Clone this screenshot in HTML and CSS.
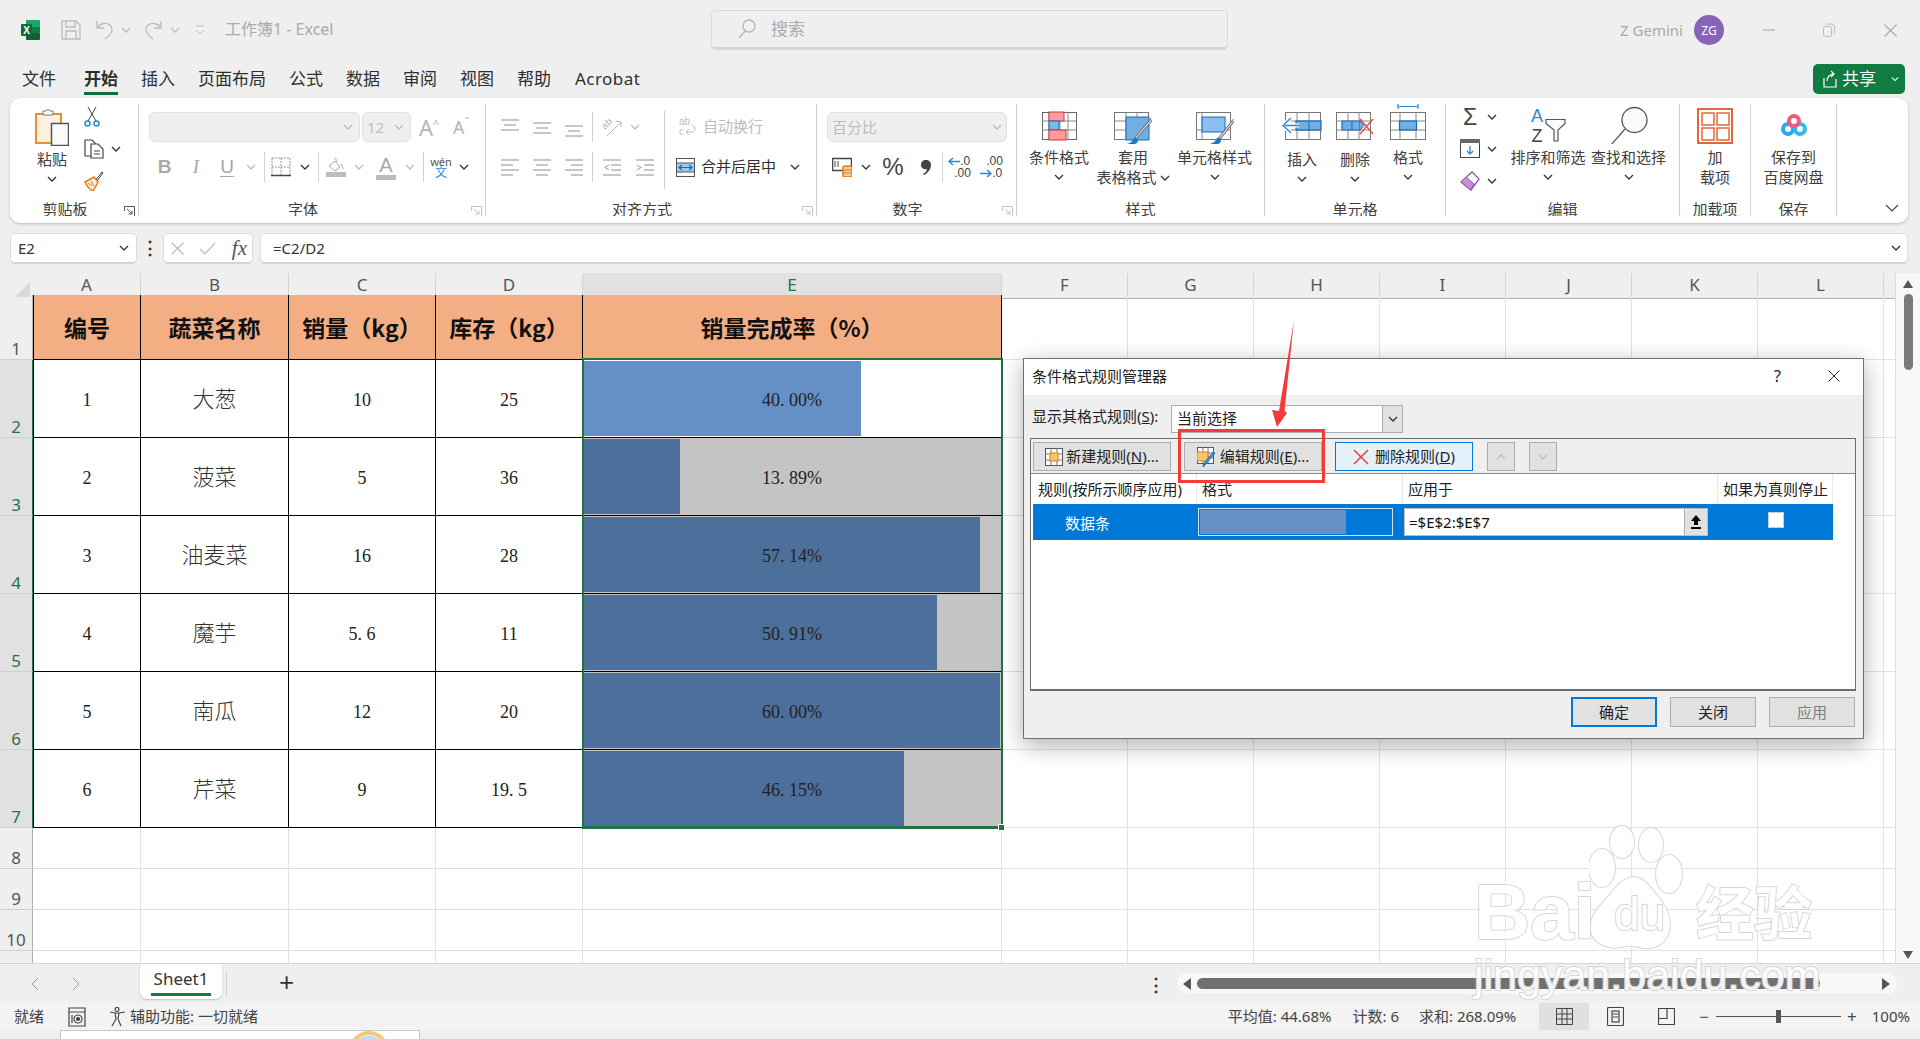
FILE: index.html
```html
<!DOCTYPE html>
<html lang="zh-CN">
<head>
<meta charset="utf-8">
<title>工作簿1 - Excel</title>
<link rel="stylesheet" href="styles.css">
</head>
<body>
<svg class="defs" width="0" height="0"><defs>
<symbol id="chev" viewBox="0 0 10 6"><path d="M1 1l4 4 4-4" fill="none" stroke="currentColor" stroke-width="1.3"/></symbol>
<symbol id="launch" viewBox="0 0 11 11"><path d="M.5 5V.5H10.500V10.500H6M3 3l5 5M8 4.500V8H4.500" fill="none" stroke="currentColor"/></symbol>
</defs></svg>
<div class="app">

<header class="titlebar">
  <div class="qat">
    <svg width="19" height="20" viewBox="0 0 19 20"><rect x="5" y="0" width="14" height="7" rx="1" fill="#21a366"/><rect x="5" y="7" width="14" height="6" fill="#107c41"/><rect x="5" y="13" width="14" height="7" rx="1" fill="#185c37"/><rect x="0" y="4" width="11" height="12" rx="1" fill="#0f6b3a"/><text x="5.500" y="13.500" font-size="10" font-weight="700" text-anchor="middle" fill="#fff" font-family="Liberation Sans">X</text></svg>
    <svg width="20" height="20" viewBox="0 0 20 20" fill="none" stroke="#bcbcbc" stroke-width="1.300"><path d="M1 1h14l4 4v14H1zM5 1v6h9V1M5 19v-8h10v8"/></svg>
    <svg width="18" height="20" viewBox="0 0 18 20" fill="none" stroke="#bcbcbc" stroke-width="1.300"><path d="M1 1v7h7M1 8c3-5 9-6 13-3 4 4 2 9-5 14"/></svg>
    <svg class="chev dis"><use href="#chev"/></svg>
    <svg width="18" height="20" viewBox="0 0 18 20" fill="none" stroke="#bcbcbc" stroke-width="1.300"><path d="M17 1v7h-7M17 8C14 3 8 2 4 5c-4 4-2 9 5 14"/></svg>
    <svg class="chev dis"><use href="#chev"/></svg>
    <svg width="10" height="12" viewBox="0 0 10 12" fill="none" stroke="#bcbcbc"><path d="M1 2h8M1 6l4 4 4-4"/></svg>
    <span class="doc">工作簿1 - Excel</span>
  </div>
  <div class="search">
    <svg width="18" height="20" viewBox="0 0 18 20" fill="none" stroke="#b5b5b5" stroke-width="1.300"><circle cx="11" cy="7" r="6"/><path d="M7 12l-6 7"/></svg>
    <span>搜索</span>
  </div>
  <div class="winbar">
    <span class="user">Z Gemini</span>
    <span class="avatar">ZG</span>
    <svg class="wmin" width="12" height="2" viewBox="0 0 12 2"><path d="M0 1h12" stroke="#bbb" stroke-width="1.500"/></svg>
    <svg class="wres" width="12" height="14" viewBox="0 0 12 14" fill="none" stroke="#bbb"><rect x=".5" y="3.500" width="8" height="10" rx="2"/><path d="M3 1h5q3.500 0 3.500 3v7"/></svg>
    <svg class="wcls" width="13" height="13" viewBox="0 0 13 13" stroke="#aaa" stroke-width="1.200"><path d="M.5.500l12 12M12.500.500l-12 12"/></svg>
  </div>
</header>

<nav class="tabs">
  <span class="tab">文件</span><span class="tab active">开始</span><span class="tab">插入</span><span class="tab">页面布局</span><span class="tab">公式</span><span class="tab">数据</span><span class="tab">审阅</span><span class="tab">视图</span><span class="tab">帮助</span><span class="tab acro">Acrobat</span>
  <div class="share">
    <svg width="15" height="18" viewBox="0 0 15 18" fill="none" stroke="#fff" stroke-width="1.200"><path d="M1 8v9h12V9M4 11c0-4 3-7 7-7M8 1l3 3-3 3"/></svg>
    <span>共享</span>
    <svg class="chev white"><use href="#chev"/></svg>
  </div>
</nav>

<section class="ribbon">
  <div class="group g-clip">
    <div class="gbody">
      <div class="paste">
        <svg width="34" height="38" viewBox="0 0 34 38"><rect x="1" y="6" width="25" height="29" fill="#fdf0df" stroke="#e8912d" stroke-width="2"/><path d="M8 6V3h3l2-2 2 2h3v4H8z" fill="#fff" stroke="#777"/><rect x="16.500" y="15.500" width="17" height="22" fill="#fafafa" stroke="#555" stroke-width="1.500"/></svg>
        <span class="txt">粘贴</span>
        <svg class="chev"><use href="#chev"/></svg>
      </div>
      <div class="clipstack">
        <div class="cliprow"><svg width="16" height="20" viewBox="0 0 16 20" fill="none"><path d="M4 0l8 14M12 0L4 14" stroke="#444"/><circle cx="3.500" cy="16.500" r="2.500" stroke="#2b88d8" stroke-width="1.500"/><circle cx="12.500" cy="16.500" r="2.500" stroke="#2b88d8" stroke-width="1.500"/></svg></div>
        <div class="cliprow"><svg width="20" height="20" viewBox="0 0 20 20" fill="#fff" stroke="#444" stroke-width="1.200"><path d="M1 1h7l3 3v13H1z"/><path d="M7 5h7l5 5v9H7z"/><path d="M10 12h6M10 15h6" stroke-width="1"/></svg><svg class="chev"><use href="#chev"/></svg></div>
        <div class="cliprow"><svg width="20" height="20" viewBox="0 0 20 20" fill="none"><path d="M12 8l3-3 3-4 1 1-3 4-2 3z" fill="#fff" stroke="#444"/><path d="M1 11l9-5 4 5-5 9c-3-1-6-5-8-9z" fill="#fdf0df" stroke="#e8790e" stroke-width="1.500"/><path d="M4 12l4 3M7 10l3 5" stroke="#e8790e"/></svg></div>
      </div>
    </div>
    <div class="glabel"><span>剪贴板</span><svg class="launch dark"><use href="#launch"/></svg></div>
  </div>

  <div class="group g-font">
    <div class="gbody rows">
      <div class="tool-row font-row1">
        <div class="combo font-name"><svg class="chev dis"><use href="#chev"/></svg></div>
        <div class="combo font-size"><span>12</span><svg class="chev dis"><use href="#chev"/></svg></div>
        <span class="growa big-a">A<sup>^</sup></span>
        <span class="growa small-a">A<sup>ˇ</sup></span>
      </div>
      <div class="tool-row font-row2 dimmed">
        <span class="fmt bold">B</span><span class="fmt ital">I</span><span class="fmt under">U</span>
        <svg class="chev dis"><use href="#chev"/></svg><i class="vsep"></i>
        <svg width="20" height="20" viewBox="0 0 20 20" fill="none" stroke="#999"><path stroke-dasharray="2 1" d="M1 1h18M1 1v17M19 1v17M10 1v17M1 10h18"/><path d="M0 18.500h20" stroke="#444" stroke-width="1.500"/></svg>
        <svg class="chev"><use href="#chev"/></svg><i class="vsep"></i>
        <svg width="20" height="20" viewBox="0 0 20 20" fill="none" stroke="#aaa"><path d="M3 9l6-5 5 6-5 4z"/><path d="M8 2c2-1 3 1 3 3M15 7c1 2 2 4 2 5"/><rect x="0" y="15" width="20" height="5" fill="#bcbcbc" stroke="none"/></svg>
        <svg class="chev dis"><use href="#chev"/></svg>
        <span class="color-a">A</span>
        <svg class="chev dis"><use href="#chev"/></svg><i class="vsep"></i>
        <span class="wen"><b>wén</b><em>文</em></span>
        <svg class="chev"><use href="#chev"/></svg>
      </div>
    </div>
    <div class="glabel"><span>字体</span><svg class="launch"><use href="#launch"/></svg></div>
  </div>

  <div class="group g-align">
    <div class="gbody flexrow">
      <div class="align-left rows">
        <div class="tool-row align-row">
          <svg class="al" viewBox="0 0 18 20"><path d="M0 3h18M3 8h12M0 13h18"/></svg>
          <svg class="al" viewBox="0 0 18 20"><path d="M0 6h18M3 11h12M0 16h18"/></svg>
          <svg class="al" viewBox="0 0 18 20"><path d="M0 9h18M3 14h12M0 19h18"/></svg>
          <i class="vsep"></i>
          <svg width="20" height="20" viewBox="0 0 20 20" fill="none" stroke="#b5b5b5"><text transform="translate(3 13) rotate(-45)" font-size="10" fill="#b5b5b5" stroke="none" font-family="Liberation Sans">ab</text><path d="M5 19L19 5M14 4l5 1v5"/></svg>
          <svg class="chev dis"><use href="#chev"/></svg>
        </div>
        <div class="tool-row align-row">
          <svg class="al" viewBox="0 0 18 20"><path d="M0 3h18M0 8h12M0 13h18M0 18h12"/></svg>
          <svg class="al" viewBox="0 0 18 20"><path d="M0 3h18M3 8h12M0 13h18M3 18h12"/></svg>
          <svg class="al" viewBox="0 0 18 20"><path d="M0 3h18M6 8h12M0 13h18M6 18h12"/></svg>
          <i class="vsep"></i>
          <svg class="al" viewBox="0 0 18 20"><path d="M0 3h18M8 8h10M8 13h10M0 18h18M6 8l-4 2.500 4 2.500"/></svg>
          <svg class="al al2" viewBox="0 0 18 20"><path d="M0 3h18M8 8h10M8 13h10M0 18h18M1 8l4 2.500-4 2.500"/></svg>
        </div>
      </div>
      <div class="align-right">
        <div class="wrapline">
          <svg width="18" height="20" viewBox="0 0 18 20" fill="none" stroke="#bcbcbc"><text x="0" y="8" font-size="10" fill="#bcbcbc" stroke="none" font-family="Liberation Sans">ab</text><text x="0" y="18" font-size="10" fill="#bcbcbc" stroke="none" font-family="Liberation Sans">c</text><path d="M13 8c4 2 4 7-1 7H7M10 12l-3 3 3 3"/></svg>
          <span>自动换行</span>
        </div>
        <div class="mergeline">
          <svg width="19" height="19" viewBox="0 0 19 19"><rect x=".5" y=".5" width="18" height="18" fill="#fff" stroke="#555"/><rect x="1" y="5" width="17" height="9" fill="#9ccbee"/><path d="M1 5h17M1 14h17" stroke="#555"/><path d="M4 9.500h11M6 7l-3 2.500L6 12M13 7l3 2.500-3 2.500" fill="none" stroke="#0f6cbd" stroke-width="1.200"/></svg>
          <span>合并后居中</span>
          <svg class="chev"><use href="#chev"/></svg>
        </div>
      </div>
    </div>
    <div class="glabel"><span>对齐方式</span><svg class="launch"><use href="#launch"/></svg></div>
  </div>

  <div class="group g-num">
    <div class="gbody rows">
      <div class="tool-row"><div class="combo num-box"><span>百分比</span><svg class="chev dis"><use href="#chev"/></svg></div></div>
      <div class="tool-row num-row2">
        <svg width="20" height="20" viewBox="0 0 20 20"><rect x=".5" y="1.500" width="19" height="12" fill="#fff" stroke="#444" stroke-width="1.500"/><path d="M3 4v6M6 4v6" stroke="#444"/><rect x="11" y="9" width="9" height="11" rx="2" fill="#f7c9a0" stroke="#e8790e" stroke-width="1.500"/><path d="M11 13h9M11 16h9" stroke="#e8790e"/></svg>
        <svg class="chev"><use href="#chev"/></svg>
        <span class="pct">%</span>
        <svg width="10" height="15" viewBox="0 0 10 15"><path d="M5 0c3 0 5 2 5 5 0 4-3 8-7 10l-1-1c2-1 4-3 4-5-3 1-6-1-6-4 0-3 2-5 5-5z" fill="#444"/></svg>
        <i class="vsep"></i>
        <span class="dec"><b><svg class="darr" viewBox="0 0 12 9"><path d="M12 4.500H1M5 1L1 4.500 5 8" fill="none" stroke="#2b88d8" stroke-width="1.500"/></svg>.0</b><b class="ind">.00</b></span>
        <span class="dec"><b class="ind">.00</b><b><svg class="darr" viewBox="0 0 12 9"><path d="M0 4.500h11M7 1l4 3.500L7 8" fill="none" stroke="#2b88d8" stroke-width="1.500"/></svg>.0</b></span>
      </div>
    </div>
    <div class="glabel"><span>数字</span><svg class="launch"><use href="#launch"/></svg></div>
  </div>

  <div class="group g-style">
    <div class="gbody flexrow">
      <div class="big w84">
        <div class="bicon"><svg width="35" height="40" viewBox="0 0 35 40"><g transform="translate(0 8)"><rect x=".5" y=".5" width="34" height="27" fill="#fff" stroke="#666"/><path d="M7 0v28M18 0v28M26 0v28M0 9h35M0 18h35" stroke="#888"/><rect x="7" y="0" width="15" height="9" fill="#ff9a9f" stroke="#d13438"/><rect x="7" y="9" width="10" height="9" fill="#7db8e8" stroke="#0f6cbd"/><rect x="7" y="18" width="17" height="10" fill="#ff9a9f" stroke="#d13438"/></g></svg></div>
        <span class="txt">条件格式</span><span class="chevline"><svg class="chev"><use href="#chev"/></svg></span>
      </div>
      <div class="big w64">
        <div class="bicon"><svg width="38" height="40" viewBox="0 0 38 40"><g transform="translate(0 8)"><rect x=".5" y=".5" width="34" height="27" fill="#fff" stroke="#777"/><path d="M12 0v28M23 0v28M0 9h35M0 18h35" stroke="#888"/><rect x="12" y="5" width="23" height="23" fill="#74aee0" stroke="#0f6cbd"/><path d="M38 7L21 27" stroke="#777" stroke-width="3"/><path d="M38 7L21 27" stroke="#fff" stroke-width="1"/><path d="M20 26c4-1 5 3 3 5-3 2-7 2-10 1 3-1 5-2 7-6z" fill="#1f79c4"/></g></svg></div>
        <span class="txt">套用</span><span class="txt">表格格式<svg class="chev inl"><use href="#chev"/></svg></span>
      </div>
      <div class="big w100">
        <div class="bicon"><svg width="38" height="40" viewBox="0 0 38 40"><g transform="translate(0 8)"><rect x=".5" y=".5" width="34" height="27" fill="#fff" stroke="#777"/><path d="M6 0v28M0 18h35" stroke="#888"/><rect x="6" y="5" width="23" height="15" fill="#8abff0" stroke="#0f6cbd"/><path d="M38 8L23 27" stroke="#777" stroke-width="3"/><path d="M38 8L23 27" stroke="#fff" stroke-width="1"/><path d="M21 26c4-1 5 3 3 5-3 2-7 2-10 1 3-1 5-2 7-6z" fill="#1f79c4"/></g></svg></div>
        <span class="txt">单元格样式</span><span class="chevline"><svg class="chev"><use href="#chev"/></svg></span>
      </div>
    </div>
    <div class="glabel nolaunch"><span>样式</span></div>
  </div>

  <div class="group g-cells">
    <div class="gbody flexrow">
      <div class="big w74">
        <div class="bicon"><svg width="40" height="40" viewBox="0 0 40 40"><g transform="translate(0 8)"><rect x="3.500" y=".5" width="35" height="27" fill="#fff" stroke="#777"/><path d="M15 0v28M27 0v28M3 9h36M3 18h36" stroke="#888"/><rect x="14" y="9" width="25" height="9" fill="#74aee0" stroke="#0f6cbd" stroke-width="1.200"/><path d="M27 9v9" stroke="#0f6cbd"/><path d="M17 13.500H3M9 6L1 13.500 9 21" fill="none" stroke="#fff" stroke-width="4"/><path d="M17 13.500H3M9 6L1 13.500 9 21" fill="none" stroke="#2b88d8" stroke-width="1.400"/></g></svg></div>
        <span class="txt lower">插入</span><span class="chevline"><svg class="chev"><use href="#chev"/></svg></span>
      </div>
      <div class="big w32">
        <div class="bicon"><svg width="38" height="40" viewBox="0 0 38 40"><g transform="translate(0 8)"><rect x=".5" y=".5" width="34" height="27" fill="#fff" stroke="#777"/><path d="M12 0v28M23 0v28M0 9h35M0 18h35" stroke="#888"/><path d="M6 9h18v9H6z" fill="#74aee0" stroke="#0f6cbd" stroke-width="1.200"/><path d="M16 9v9M24 9l4 4.500-4 4.500" stroke="#0f6cbd" fill="#74aee0"/><path d="M24 7l13 15M37 7L24 22" stroke="#f04848" stroke-width="1.400"/></g></svg></div>
        <span class="txt lower">删除</span><span class="chevline"><svg class="chev"><use href="#chev"/></svg></span>
      </div>
      <div class="big w75">
        <div class="bicon"><svg width="36" height="40" viewBox="0 0 36 40"><path d="M8 2.500h20M8 0v5M28 0v5" stroke="#2b88d8" stroke-width="1.200"/><g transform="translate(0 8)"><rect x=".5" y=".5" width="35" height="27" fill="#fff" stroke="#777"/><path d="M10 0v28M26 0v28M0 9h35M0 18h35" stroke="#888"/><rect x="9.500" y="9" width="17" height="9" fill="#74aee0" stroke="#0f6cbd" stroke-width="1.200"/></g></svg></div>
        <span class="txt">格式</span><span class="chevline"><svg class="chev"><use href="#chev"/></svg></span>
      </div>
    </div>
    <div class="glabel nolaunch"><span>单元格</span></div>
  </div>

  <div class="group g-edit">
    <div class="gbody flexrow">
      <div class="edit-stack">
        <div class="cliprow"><span class="sigma">Σ</span><svg class="chev"><use href="#chev"/></svg></div>
        <div class="cliprow"><svg width="20" height="20" viewBox="0 0 20 20"><rect x=".5" y=".5" width="19" height="18" fill="#fff" stroke="#444"/><rect x="0" y="0" width="20" height="4" fill="#666"/><path d="M10 7v8M7 12l3 3 3-3" fill="none" stroke="#2b88d8" stroke-width="1.300"/></svg><svg class="chev"><use href="#chev"/></svg></div>
        <div class="cliprow"><svg width="20" height="20" viewBox="0 0 20 20"><path d="M12 1l7 7-8 11-10-8z" fill="#fff" stroke="#9b4fb0" stroke-width="1.300"/><path d="M6 6l8 7-3.500 6L1 11z" fill="#c78fd6" stroke="#9b4fb0"/></svg><svg class="chev"><use href="#chev"/></svg></div>
      </div>
      <div class="big w84b">
        <div class="bicon"><svg width="36" height="40" viewBox="0 0 36 40" fill="none"><text x="7" y="18" font-size="18" text-anchor="middle" fill="#2b88d8" font-family="Liberation Sans">A</text><text x="7" y="38" font-size="18" text-anchor="middle" fill="#444" font-family="Liberation Sans">Z</text><path d="M16 15.500h19v4l-7 6.500v11h-4V26l-8-6.500z" stroke="#555" stroke-width="1.200" fill="#fafafa"/></svg></div>
        <span class="txt">排序和筛选</span><span class="chevline"><svg class="chev"><use href="#chev"/></svg></span>
      </div>
      <div class="big w77">
        <div class="bicon"><svg width="38" height="40" viewBox="0 0 38 40" fill="none"><circle cx="24.500" cy="16" r="12.500" fill="#fafafa" stroke="#555" stroke-width="1.300"/><path d="M15 25L1 41" stroke="#555" stroke-width="1.200"/></svg></div>
        <span class="txt">查找和选择</span><span class="chevline"><svg class="chev"><use href="#chev"/></svg></span>
      </div>
    </div>
    <div class="glabel nolaunch"><span>编辑</span></div>
  </div>

  <div class="group g-add">
    <div class="gbody flexrow">
      <div class="big w70">
        <div class="bicon"><svg width="36" height="40" viewBox="0 0 36 40" fill="none" stroke="#e2683c" stroke-width="1.500"><rect x="1" y="5" width="34" height="34" stroke-width="2"/><rect x="5" y="9" width="12" height="12"/><rect x="20" y="9" width="12" height="12"/><rect x="5" y="24" width="12" height="12"/><rect x="20" y="24" width="12" height="12"/></svg></div>
        <span class="txt">加</span><span class="txt">载项</span>
      </div>
    </div>
    <div class="glabel nolaunch"><span>加载项</span></div>
  </div>

  <div class="group g-save">
    <div class="gbody flexrow">
      <div class="big w85">
        <div class="bicon"><svg width="26" height="40" viewBox="0 0 26 40" fill="none"><g transform="translate(0 10)"><circle cx="7" cy="15" r="5" stroke="#2ea8ec" stroke-width="4"/><circle cx="19" cy="15" r="5" stroke="#2bbdef" stroke-width="4"/><circle cx="13" cy="7" r="5" stroke="#f4587c" stroke-width="4"/></g></svg></div>
        <span class="txt">保存到</span><span class="txt">百度网盘</span>
      </div>
    </div>
    <div class="glabel nolaunch"><span>保存</span></div>
  </div>

  <div class="collapse"><svg width="14" height="8" viewBox="0 0 14 8"><path d="M1 1l6 6 6-6" fill="none" stroke="#444" stroke-width="1.200"/></svg></div>
</section>

<section class="formula">
  <div class="fbox namebox"><span>E2</span><svg class="chev"><use href="#chev"/></svg></div>
  <span class="fdots">⋮</span>
  <div class="fbox fxbox">
    <svg width="13" height="13" viewBox="0 0 13 13" stroke="#bbb" stroke-width="1.200"><path d="M.5.500l12 12M12.500.500l-12 12"/></svg>
    <svg width="17" height="13" viewBox="0 0 17 13" stroke="#bbb" fill="none" stroke-width="1.200"><path d="M1 7l5 5L16 1"/></svg>
    <span class="fx">fx</span>
  </div>
  <div class="fbox fedit"><span>=C2/D2</span><svg class="chev"><use href="#chev"/></svg></div>
</section>

<section class="sheet">
  <div class="grid">
    <div class="row r-col">
      <div class="rh corner"><i></i></div>
      <div class="ch">A</div><div class="ch">B</div><div class="ch">C</div><div class="ch">D</div><div class="ch on">E</div>
      <div class="rest colrest"><span>F</span><span>G</span><span>H</span><span>I</span><span>J</span><span>K</span><span>L</span></div>
    </div>
    <div class="row r-head">
      <div class="rh">1</div>
      <div class="c head">编号</div><div class="c head">蔬菜名称</div><div class="c head">销量（kg）</div><div class="c head">库存（kg）</div><div class="c head">销量完成率（%）</div>
      <div class="rest"></div>
    </div>
    <div class="row r-data">
      <div class="rh on">2</div><div class="c">1</div><div class="c">大葱</div><div class="c">10</div><div class="c">25</div>
      <div class="c e white"><i class="bar first" style="width:277px"></i><span>40. 00%</span></div><div class="rest"></div>
    </div>
    <div class="row r-data">
      <div class="rh on">3</div><div class="c">2</div><div class="c">菠菜</div><div class="c">5</div><div class="c">36</div>
      <div class="c e"><i class="bar" style="width:96px"></i><span>13. 89%</span></div><div class="rest"></div>
    </div>
    <div class="row r-data">
      <div class="rh on">4</div><div class="c">3</div><div class="c">油麦菜</div><div class="c">16</div><div class="c">28</div>
      <div class="c e"><i class="bar" style="width:396px"></i><span>57. 14%</span></div><div class="rest"></div>
    </div>
    <div class="row r-data">
      <div class="rh on">5</div><div class="c">4</div><div class="c">魔芋</div><div class="c">5. 6</div><div class="c">11</div>
      <div class="c e"><i class="bar" style="width:353px"></i><span>50. 91%</span></div><div class="rest"></div>
    </div>
    <div class="row r-data">
      <div class="rh on">6</div><div class="c">5</div><div class="c">南瓜</div><div class="c">12</div><div class="c">20</div>
      <div class="c e"><i class="bar" style="width:416px"></i><span>60. 00%</span></div><div class="rest"></div>
    </div>
    <div class="row r-data">
      <div class="rh on">7</div><div class="c">6</div><div class="c">芹菜</div><div class="c">9</div><div class="c">19. 5</div>
      <div class="c e"><i class="bar" style="width:320px"></i><span>46. 15%</span></div><div class="rest"></div>
    </div>
    <div class="row r-empty"><div class="rh">8</div><div class="b"></div><div class="b"></div><div class="b"></div><div class="b"></div><div class="b"></div><div class="rest"></div></div>
    <div class="row r-empty"><div class="rh">9</div><div class="b"></div><div class="b"></div><div class="b"></div><div class="b"></div><div class="b"></div><div class="rest"></div></div>
    <div class="row r-empty"><div class="rh">10</div><div class="b"></div><div class="b"></div><div class="b"></div><div class="b"></div><div class="b"></div><div class="rest"></div></div>
    <div class="row r-tail"><div class="rh"></div><div class="b"></div><div class="b"></div><div class="b"></div><div class="b"></div><div class="b"></div><div class="rest"></div></div>
    <div class="selection"><i></i></div>
  </div>
  <aside class="vscroll">
    <svg width="10" height="8" viewBox="0 0 10 8"><path d="M5 0l5 8H0z" fill="#555"/></svg>
    <i class="vthumb"></i>
    <svg class="vdown" width="10" height="8" viewBox="0 0 10 8"><path d="M5 8L0 0h10z" fill="#555"/></svg>
  </aside>
</section>

<section class="sheetbar">
  <svg class="nav-l" width="8" height="14" viewBox="0 0 8 14"><path d="M7 1L1 7l6 6" fill="none" stroke="#999"/></svg>
  <svg class="nav-r" width="8" height="14" viewBox="0 0 8 14"><path d="M1 1l6 6-6 6" fill="none" stroke="#999"/></svg>
  <div class="sheettab"><span>Sheet1</span></div>
  <i class="tabsep"></i>
  <span class="addsheet">+</span>
  <span class="hdots">⋮</span>
  <div class="hscroll">
    <svg width="8" height="12" viewBox="0 0 8 12"><path d="M0 6l8-6v12z" fill="#555"/></svg>
    <i class="hthumb"></i>
    <svg width="8" height="12" viewBox="0 0 8 12"><path d="M8 6L0 0v12z" fill="#555"/></svg>
  </div>
</section>

<footer class="status">
  <span class="st-ready">就绪</span>
  <svg class="st-macro" width="18" height="20" viewBox="0 0 18 20" fill="none" stroke="#444" stroke-width="1.200"><path d="M1 1h16v18H1zM1 5h16"/><circle cx="10" cy="12" r="4"/><circle cx="10" cy="12" r="1.500" fill="#444"/><path d="M4 8v8"/></svg>
  <svg class="st-acc" width="17" height="20" viewBox="0 0 17 20" fill="none" stroke="#444" stroke-width="1.200"><circle cx="8" cy="2.500" r="2"/><path d="M1 5l5 1h4l6-1M6 6l1 6-4 7M10 6l-1 6 3 7"/></svg>
  <span>辅助功能: 一切就绪</span>
  <div class="st-right">
    <span class="st-a">平均值: 44.68%</span><span class="st-b">计数: 6</span><span class="st-c">求和: 268.09%</span>
    <div class="vbtn on"><svg width="17" height="17" viewBox="0 0 17 17" fill="none" stroke="#444"><path d="M.5.500h16v16H.5zM.5 6h16M.5 11h16M6 .5v16M11 .5v16"/></svg></div>
    <div class="vbtn"><svg width="17" height="19" viewBox="0 0 17 19" fill="none" stroke="#444" stroke-width="1.200"><rect x=".5" y=".5" width="16" height="18" rx="1"/><rect x="5" y="4" width="7" height="11"/><path d="M6 7h5M6 10h5"/></svg></div>
    <div class="vbtn"><svg width="17" height="17" viewBox="0 0 17 17" fill="none" stroke="#444" stroke-width="1.200"><path d="M.5.500h16v16H.5zM9 .5v10H.5"/></svg></div>
    <span class="zm">−</span>
    <div class="slider"><i></i></div>
    <span class="zp">+</span>
    <span class="zv">100%</span>
  </div>
</footer>
<div class="taskstrip"><div class="peek"><svg width="40" height="9" viewBox="0 0 40 9" fill="none"><circle cx="20" cy="20" r="18" stroke="#f5c77a" stroke-width="4"/><circle cx="20" cy="20" r="14" stroke="#bcdcf0" stroke-width="3"/></svg></div></div>

<div class="dialog">
  <div class="dlg-title"><span>条件格式规则管理器</span><span class="dlg-help">?</span>
    <svg class="dlg-x" width="12" height="12" viewBox="0 0 12 12" stroke="#222"><path d="M.5.500l11 11M11.500.500l-11 11"/></svg></div>
  <div class="dlg-body">
    <div class="dlg-show">
      <span class="showlbl">显示其格式规则(<u>S</u>):</span>
      <div class="showbox"><span>当前选择</span><i class="showbtn"><svg class="chev"><use href="#chev"/></svg></i></div>
    </div>
    <div class="rulebox">
      <div class="toolbar">
        <button class="btn">
          <svg width="18" height="18" viewBox="0 0 18 18"><rect x=".5" y=".5" width="17" height="17" fill="#fff" stroke="#555"/><path d="M6 0v18M12 0v18M0 6h18M0 12h18" stroke="#777"/><rect x="5" y="5" width="8" height="8" fill="#f7c56b" stroke="#e8790e"/></svg>
          <span>新建规则(<u>N</u>)...</span></button>
        <button class="btn">
          <svg width="20" height="20" viewBox="0 0 20 20"><rect x=".5" y=".5" width="16" height="16" fill="#fff" stroke="#555"/><path d="M6 0v16M11 0v16M0 6h16M0 11h16" stroke="#777"/><rect x="0" y="5" width="11" height="9" fill="#f7c56b" stroke="#e8790e"/><path d="M18 6L8 18l-2 2 .5-3L16 5z" fill="#4a9be0" stroke="#0f6cbd"/></svg>
          <span>编辑规则(<u>E</u>)...</span></button>
        <button class="btn del">
          <svg width="16" height="16" viewBox="0 0 16 16" stroke="#e8413c" stroke-width="1.500"><path d="M1 1l14 14M15 1L1 15"/></svg>
          <span>删除规则(<u>D</u>)</span></button>
        <button class="btn arrow up" aria-label="上移"><svg class="chev dis flip"><use href="#chev"/></svg></button>
        <button class="btn arrow" aria-label="下移"><svg class="chev dis"><use href="#chev"/></svg></button>
      </div>
      <div class="rulelist">
        <div class="rulehead"><span>规则(按所示顺序应用)</span><span>格式</span><span>应用于</span><span>如果为真则停止</span></div>
        <div class="rulerow">
          <span class="rname">数据条</span>
          <div class="rfmt"><i></i></div>
          <div class="rapply"><span>=$E$2:$E$7</span><i class="rpick"><svg width="10" height="14" viewBox="0 0 10 14"><path d="M5 0l5 6H7v4H3V6H0zM0 12h10v2H0z" fill="#000"/></svg></i></div>
          <div class="rstop"><i></i></div>
        </div>
      </div>
    </div>
    <div class="dlg-foot">
      <button class="btn wide primary">确定</button><button class="btn wide">关闭</button><button class="btn wide off">应用</button>
    </div>
  </div>
</div>

<svg class="annot" width="170" height="180" viewBox="0 0 170 180">
  <rect x="9.500" y="120.500" width="144" height="51" fill="none" stroke="#f53a3a" stroke-width="3"/>
  <polygon points="124,10 114.500,101 117,103 107,117 102,100 109,101" fill="#f53a3a"/>
</svg>

<div class="watermark">
  <svg class="paw" width="120" height="130" viewBox="0 0 120 130" fill="#fff" stroke="#d4d4d4" stroke-width="2">
    <ellipse cx="33" cy="17" rx="12" ry="16"/><ellipse cx="62" cy="20" rx="12" ry="17"/>
    <ellipse cx="13" cy="43" rx="13" ry="19"/><ellipse cx="80" cy="49" rx="13" ry="19"/>
    <path d="M45 52c9 0 15 9 22 17 8 9 14 19 14 31 0 16-14 25-26 23-7-1-12-3-18-2-6 1-11 3-17 1C6 119 0 110 2 98c1-9 9-17 15-24 8-9 16-22 28-22z"/>
  </svg>
  <span class="wm-bai">Bai</span>
  <span class="wm-du">du</span>
  <span class="wm-jy">经验</span>
  <span class="wm-url">jingyan.baidu.com</span>
</div>
</div>
</body>
</html>
```
FILE: styles.css
```css
*{box-sizing:border-box}
html,body{margin:0;padding:0;height:100%}
body{font-family:"Noto Sans","Noto Sans CJK SC","Liberation Sans",sans-serif;background:#efefef;color:#333;overflow:hidden}
.defs{position:absolute}
.app{position:relative;width:1920px;height:1039px;display:flex;flex-direction:column;overflow:hidden;background:#efefef}
svg{display:block;flex:none}
i{display:block;font-style:normal}
button{font:inherit;color:inherit;margin:0;padding:0}

.chev{width:10px;height:6px;color:#333}
.chev.dis{color:#bdbdbd}
.chev.white{color:#fff}
.chev.flip{transform:rotate(180deg)}
.chev.inl{display:inline-block;margin-left:3px;vertical-align:2px}
.launch{width:11px;height:11px;color:#c4c4c4}
.launch.dark{color:#555}

/* title bar */
.titlebar{height:60px;flex:none;display:grid;grid-template-columns:711px 517px 1fr;align-items:center}
.qat{display:grid;grid-template-columns:40px 35px 25px 23px 26px 25px 30px auto;align-items:center;padding-left:21px}
.doc{font-size:16px;line-height:20px;color:#a9a9a9;margin-top:-2px}
.search{height:40px;border:1px solid #dcdcdc;border-bottom:3px solid #d6d6d6;border-radius:5px;display:flex;align-items:center;gap:15px;padding-left:26px;font-size:17px;color:#ababab;line-height:20px}
.winbar{display:flex;align-items:center;justify-content:flex-end;padding-right:23px}
.user{font-size:15px;color:#a9a9a9;margin-right:11px}
.avatar{width:30px;height:30px;border-radius:50%;background:#8764b8;color:#fff;font-size:12px;display:flex;align-items:center;justify-content:center}
.wmin{margin-left:39px}.wres{margin-left:48px}.wcls{margin-left:49px}

/* tabs */
.tabs{height:38px;flex:none;display:flex;gap:23px;padding-left:22px;font-size:17px;line-height:38px;color:#2e2e2e}
.tab{height:35px}
.tab.active{border-bottom:3px solid #0f6b3a;font-weight:700;margin-left:5px}
.tab.acro{margin-left:1px;letter-spacing:.45px}
.share{margin-left:auto;margin-right:15px;margin-top:4px;width:92px;height:30px;background:#107c41;border-radius:5px;color:#fff;display:flex;align-items:center;padding:0 6px 0 10px;gap:4px;line-height:30px}
.share .chev{margin-left:auto;width:8px}

/* ribbon */
.ribbon{margin:0 12px 0 10px;height:125px;flex:none;background:#fff;border-radius:10px;box-shadow:0 1px 3px rgba(0,0,0,.22);display:flex;padding-top:6px;align-items:flex-start;font-size:15px;color:#404040}
.group{height:112px;overflow:hidden;border-right:1px solid #d2d2d2;display:flex;flex-direction:column;flex:none}
.gbody{height:94px;flex:none}
.flexrow{display:flex}
.g-clip{width:129px}.g-font{width:347px}.g-align{width:331px}.g-num{width:200px}.g-style{width:248px}.g-cells{width:181px}.g-edit{width:234px}.g-add{width:71px}.g-save{width:86px}
.glabel{display:grid;grid-template-columns:1fr 18px;align-items:center;height:22px;line-height:22px;text-align:center;flex:none}
.glabel svg{justify-self:center;margin-top:4px}
.glabel.nolaunch{grid-template-columns:1fr}
.txt{line-height:20px;white-space:nowrap}
.txt.lower{margin-top:2px}

.g-clip .gbody{display:flex;padding-left:22px}
.paste{width:40px;display:flex;flex-direction:column;align-items:center;padding-top:4px}
.paste .txt{margin-top:2px;line-height:22px}
.paste .chev{margin-top:6px}
.clipstack{display:flex;flex-direction:column;gap:12px;padding:3px 0 0 12px}
.cliprow{height:20px;display:flex;align-items:center;gap:7px}

.rows{display:flex;flex-direction:column;gap:10px;padding-top:8px}
.tool-row{height:30px;display:grid;align-items:center;justify-items:center}
.g-font .rows{padding-left:10px}
.font-row1{display:flex;justify-content:flex-start}
.combo{height:30px;background:#efefef;border:1px solid #e0e0e0;border-radius:6px;display:flex;align-items:center;justify-content:space-between;padding:0 6px 0 4px;color:#bdbdbd;font-size:15px;line-height:26px}
.font-name{width:211px;justify-content:flex-end;margin-right:2px}
.font-size{width:49px}
.growa{font-size:22px;color:#b5b5b5;line-height:30px}
.growa sup{font-size:11px;vertical-align:8px;line-height:0}
.big-a{margin-left:8px;width:34px}
.small-a{font-size:18px}
.font-row2{grid-template-columns:31px 32px 30px 18px 8px 26px 22px 4px 32px 14px 40px 8px 18px 18px 28px}
.vsep{width:1px;height:30px;background:#d2d2d2}
.fmt{font-family:"Liberation Serif",serif;font-size:19px;color:#a8a8a8}
.fmt.bold{font-family:"Liberation Sans";font-weight:700}
.fmt.ital{font-style:italic}
.fmt.under{font-family:"Liberation Sans";text-decoration:underline;text-underline-offset:3px}
.color-a{font-family:"Liberation Sans";font-size:20px;color:#a8a8a8;border-bottom:5px solid #bcbcbc;line-height:20px;width:20px;text-align:center}
.wen{display:flex;flex-direction:column;align-items:center;line-height:11px}
.wen b{font-weight:400;font-size:11px;color:#555}
.wen em{font-style:normal;font-size:12px;color:#2b88d8}

.align-left{width:179px;border-right:1px solid #d2d2d2;height:78px;margin-top:7px;padding:1px 0 0 8px}
.align-row{grid-template-columns:32px 32px 32px 4px 36px 10px}
.al{width:18px;height:20px;fill:none;stroke:#b5b5b5;stroke-width:1.300}
.align-left.rows{padding-top:1px}
.align-row .al2{grid-column:6;margin-left:20px}
.align-right{display:flex;flex-direction:column;gap:10px;padding-top:8px}
.wrapline{height:30px;display:flex;align-items:center;gap:6px;padding-left:14px;color:#bdbdbd;line-height:26px}
.mergeline{height:30px;display:flex;align-items:center;gap:6px;padding-left:11px;color:#2e2e2e;line-height:26px}
.wrapline span,.mergeline span{margin-top:-3px}
.mergeline .chev{margin-left:8px}

.g-num .rows{padding-left:10px}
.num-box{width:180px;padding:0 4px}
.g-num .tool-row{justify-items:start}
.num-row2{grid-template-columns:30px 18px 36px 30px 3px 31px 33px;justify-items:center!important}
.pct{font-family:"Liberation Sans";font-size:24px;color:#444;line-height:30px}
.dec{display:flex;flex-direction:column;align-items:flex-start;font-family:"Liberation Sans";font-size:12px;line-height:12px;color:#444}
.dec b{font-weight:400;white-space:nowrap;display:flex;align-items:center}
.dec b.ind{margin-left:6px}
.darr{width:12px;height:9px}

.big{display:flex;flex-direction:column;align-items:center;flex:none}
.bicon{height:43px;flex:none}
.chevline{height:20px;display:flex;align-items:center;justify-content:center}
.w84{width:84px}.w64{width:64px}.w100{width:99px}.w74{width:74px}.w32{width:32px}.w75{width:74px}.w84b{width:84px}.w77{width:77px}.w70{width:70px}.w85{width:85px}
.edit-stack{width:60px;display:flex;flex-direction:column;gap:12px;padding:3px 0 0 14px}
.sigma{width:20px;font-family:"Liberation Sans";font-size:23px;line-height:20px;text-align:center;color:#444}
.collapse{flex:1;display:flex;justify-content:flex-end;height:108px;align-items:flex-end;padding-right:9px}

/* formula bar */
.formula{flex:none;margin-top:10px;height:31px;display:flex;padding:0 12px 0 10px;font-size:15px;color:#333;line-height:29px}
.fbox{background:#fff;border:1px solid #dcdcdc;border-bottom:2px solid #d4d4d4;border-radius:5px;display:flex;align-items:center}
.namebox{width:127px;justify-content:space-between;padding:0 7px}
.fdots{width:26px;text-align:center;font-size:18px;font-weight:700}
.fxbox{width:90px;padding:0 5px 0 7px;justify-content:space-between}
.fx{font-family:"Liberation Serif",serif;font-style:italic;font-size:21px;color:#555}
.fedit{flex:1;margin-left:7px;padding:0 6px 0 12px;justify-content:space-between}

/* sheet */
.sheet{flex:none;margin-top:9px;height:690px;display:flex;background:#fff}
.grid{position:relative;width:1895px;flex:none;display:flex;flex-direction:column;background:#fff}
.row{display:grid;grid-template-columns:33px 108px 148px 147px 147px 419px 893px;flex:none}
.r-col{height:22px;background:#efefef}
.r-head{height:65px}.r-data{height:78px}.r-empty{height:41px}.r-tail{height:12px}
.rh{background:#efefef;color:#555;font-family:"Noto Sans",sans-serif;font-size:17px;line-height:20px;display:flex;align-items:flex-end;justify-content:center;border-right:1px solid #b0b0b0;border-bottom:1px solid #cfcfcf}
.rh.on{background:#e1e1e1;color:#217346;border-right:1px solid #217346}
.corner{border:0;align-items:flex-end;justify-content:flex-end;padding:0 3px 2px 0;background:#efefef}
.corner i{width:15px;height:15px;background:#d9d9d9;clip-path:polygon(100% 0,100% 100%,0 100%)}
.ch{background:#efefef;color:#555;font-size:17px;line-height:24px;text-align:center;border-right:1px solid #d4d4d4;border-bottom:1px solid #b0b0b0}
.ch.on{background:#e1e1e1;color:#217346;border-bottom:2px solid #217346}
.c{display:flex;align-items:center;justify-content:center;border-right:1px solid #000;border-bottom:1px solid #000;font-family:"Liberation Serif","Noto Sans CJK SC",serif;font-size:18px;color:#222;white-space:nowrap;padding-top:4px}
.c:nth-child(2){border-left:1px solid #000}
.head{background:#f4ae84;font-family:"Noto Sans CJK SC",sans-serif;font-size:23px;font-weight:700;color:#111;line-height:30px;padding-top:0}
.r-data .c:nth-child(3){font-size:22px;font-family:"Noto Sans CJK SC",sans-serif;font-weight:300;color:#333;padding:0 0 3px}
.c.e{display:grid;grid-template-columns:1fr;grid-template-rows:1fr;justify-items:stretch;background:#c4c4c4;padding:1px 1px 1px 1px;border-right:0}
.c.e.white{background:#fff}
.c.e>*{grid-area:1/1}
.c.e span{justify-self:center;align-self:center;padding:4px 1px 0 0}
.bar{height:100%;background:#4d6f9c}
.bar.first{background:#6490c6}
.b{border-right:1px solid #e2e2e2;border-bottom:1px solid #dcdcdc}
.r-tail .b{border-bottom:0}
.r-tail .rh{border-bottom:0}
.rest{background:repeating-linear-gradient(90deg,transparent 0,transparent 125px,#e2e2e2 125px,#e2e2e2 126px);border-bottom:1px solid #e2e2e2}
.r-tail .rest{border-bottom:0}
.colrest{background:#efefef;display:flex;border-bottom:1px solid #b0b0b0;color:#555;font-size:17px;line-height:24px}
.colrest span{width:126px;text-align:center;border-right:1px solid #d4d4d4}
.selection{position:absolute;left:582px;top:85px;width:421px;height:471px;border:2px solid #217346;border-bottom-width:3px;pointer-events:none}
.selection i{position:absolute;right:-4px;bottom:-5px;width:7px;height:7px;background:#217346;border:1px solid #fff}
.vscroll{width:25px;flex:none;background:#f8f8f8;border-left:1px solid #dcdcdc;display:flex;flex-direction:column;align-items:center;padding-top:7px}
.vthumb{width:9px;height:76px;background:#7a7a7a;border-radius:5px;margin-top:6px}
.vdown{margin-top:auto;margin-bottom:4px}

/* sheet tabs */
.sheetbar{flex:none;height:40px;display:flex;align-items:center;border-top:1px solid #d6d6d6;background:#efefef}
.nav-l{margin-left:31px}.nav-r{margin-left:33px}
.sheettab{align-self:flex-start;margin-left:60px;width:82px;height:35px;background:#fff;border-radius:0 0 7px 7px;box-shadow:0 1px 2px rgba(0,0,0,.2);display:flex;justify-content:center}
.sheettab span{width:60px;height:32px;border-bottom:3px solid #107c41;font-size:17px;line-height:30px;text-align:center;color:#333}
.tabsep{width:1px;height:24px;background:#ccc;margin-left:4px}
.addsheet{font-family:"Liberation Sans";font-size:26px;line-height:26px;margin-left:52px;color:#333;margin-bottom:4px}
.hdots{margin-left:auto;font-size:18px;font-weight:700;width:20px;text-align:center}
.hscroll{margin:0 23px 0 11px;width:720px;height:21px;background:#f7f7f7;border-radius:10px;display:flex;align-items:center;padding:0 7px 0 6px}
.hthumb{margin:0 auto 0 6px;width:623px;height:11px;background:#707070;border-radius:6px}

/* status */
.status{flex:none;height:27px;background:#f3f3f3;display:flex;align-items:center;font-size:15px;color:#444;line-height:27px}
.st-ready{margin-left:14px}
.st-macro{margin-left:24px}.st-acc{margin:0 4px 0 23px}
.st-right{margin-left:auto;display:flex;align-items:center;height:27px;padding-right:10px}
.st-b{margin-left:21px}.st-c{margin-left:20px;margin-right:23px}
.vbtn{width:50px;height:27px;display:flex;align-items:center;justify-content:center;margin-right:1px}
.vbtn.on{background:#e0e0e0}
.zm{margin-left:7px;font-size:17px}
.slider{width:125px;height:1px;background:#555;margin-left:7px;position:relative}
.slider i{position:absolute;left:60px;top:-6px;width:5px;height:13px;background:#555}
.zp{font-size:17px;margin-left:6px}
.zv{margin-left:15px;font-size:15px}
.taskstrip{flex:1;background:#efefef;padding-left:60px}
.peek{width:360px;height:9px;background:#fff;border:1px solid #c8c8c8;border-bottom:0;display:flex;justify-content:flex-end;padding-right:30px}

/* dialog */
.dialog{position:absolute;left:1023px;top:358px;width:841px;height:381px;background:#efefef;border:1px solid #6f6f6f;box-shadow:0 6px 22px rgba(0,0,0,.32);font-size:15px;color:#222;display:flex;flex-direction:column}
.dlg-title{height:36px;flex:none;background:#fff;display:flex;align-items:center;padding:0 0 3px 8px;line-height:20px}
.dlg-help{margin-left:auto;font-size:16px}
.dlg-x{margin:0 23px 0 47px}
.dlg-body{flex:1;display:flex;flex-direction:column;padding:0 7px 0 6px}
.dlg-show{height:43px;flex:none;display:flex;align-items:flex-start;padding:10px 0 0 2px;line-height:22px}
.showlbl{width:139px;white-space:nowrap}
.showbox{width:232px;height:28px;background:#fff;border:1px solid #adadad;display:flex;justify-content:space-between;padding-left:5px;line-height:24px}
.showbtn{width:20px;background:#e1e1e1;border-left:1px solid #adadad;display:flex;align-items:center;justify-content:center}
.rulebox{height:253px;flex:none;border:1px solid #6e6e6e;border-bottom-width:2px;display:flex;flex-direction:column;background:#efefef}
.toolbar{height:34px;flex:none;padding:3px 2px 0;display:flex;gap:13px}
.btn{height:29px;background:#e1e1e1;border:1px solid #adadad;display:flex;align-items:center;justify-content:center;gap:3px;width:138px;font-size:15px;line-height:20px;white-space:nowrap;border-radius:0}
.btn span{margin-top:-2px}
.btn.del{background:#e5f1fb;border-color:#0078d7;gap:6px}
.btn.arrow{width:28px;margin-left:1px}
.rulelist{flex:1;background:#fff;border-top:1px solid #8a8a8a;padding-left:2px}
.rulehead{height:30px;display:grid;grid-template-columns:164px 206px 315px 115px;width:800px;font-size:15px;line-height:30px;white-space:nowrap}
.rulehead span{padding-left:5px;border-right:1px solid #e8e8e8}
.rulerow{height:36px;width:800px;background:#0078d7;display:grid;grid-template-columns:165px 206px 314px 115px;align-items:center;color:#fff}
.rname{padding-left:32px}
.rfmt{width:195px;height:28px;border:1px solid #cfe3f7;background:#0078d7;padding:1px 0 1px 1px}
.rfmt i{width:146px;height:100%;background:#6490c6}
.rapply{width:304px;height:28px;background:#fff;color:#111;display:flex;justify-content:space-between;line-height:27px;padding-left:4px;border:1px solid #bfbfbf}
.rpick{width:23px;background:#e1e1e1;border-left:1px solid #adadad;display:flex;align-items:center;justify-content:center}
.rstop{display:flex;justify-content:center}
.rstop i{width:16px;height:16px;background:#fff;border:1px solid #ccc;margin-top:-4px}
.dlg-foot{flex:1;display:flex;justify-content:flex-end;gap:13px;padding-top:6px;margin-right:1px}
.btn.wide{width:86px;height:30px}
.btn.primary{border:2px solid #0078d7}
.btn.off{color:#7d7d7d}

/* annotations */
.annot{position:absolute;left:1170px;top:310px;pointer-events:none}
.watermark{position:absolute;left:1474px;top:825px;width:350px;height:175px;pointer-events:none;color:#fff;-webkit-text-stroke:2px #d4d4d4;paint-order:stroke fill;opacity:.92;font-family:"Liberation Sans",sans-serif}
.watermark span{position:absolute;line-height:1;paint-order:stroke fill;white-space:nowrap}
.paw{position:absolute;left:115px;top:0}
.wm-bai{left:0;top:48px;font-size:78px;font-weight:700}
.wm-du{left:140px;top:66px;font-size:46px;font-weight:400}
.wm-jy{left:222px;top:56px;font-size:58px;font-weight:700;font-family:"Noto Sans CJK SC",sans-serif}
.wm-url{left:0;top:129px;font-size:43px}
```
